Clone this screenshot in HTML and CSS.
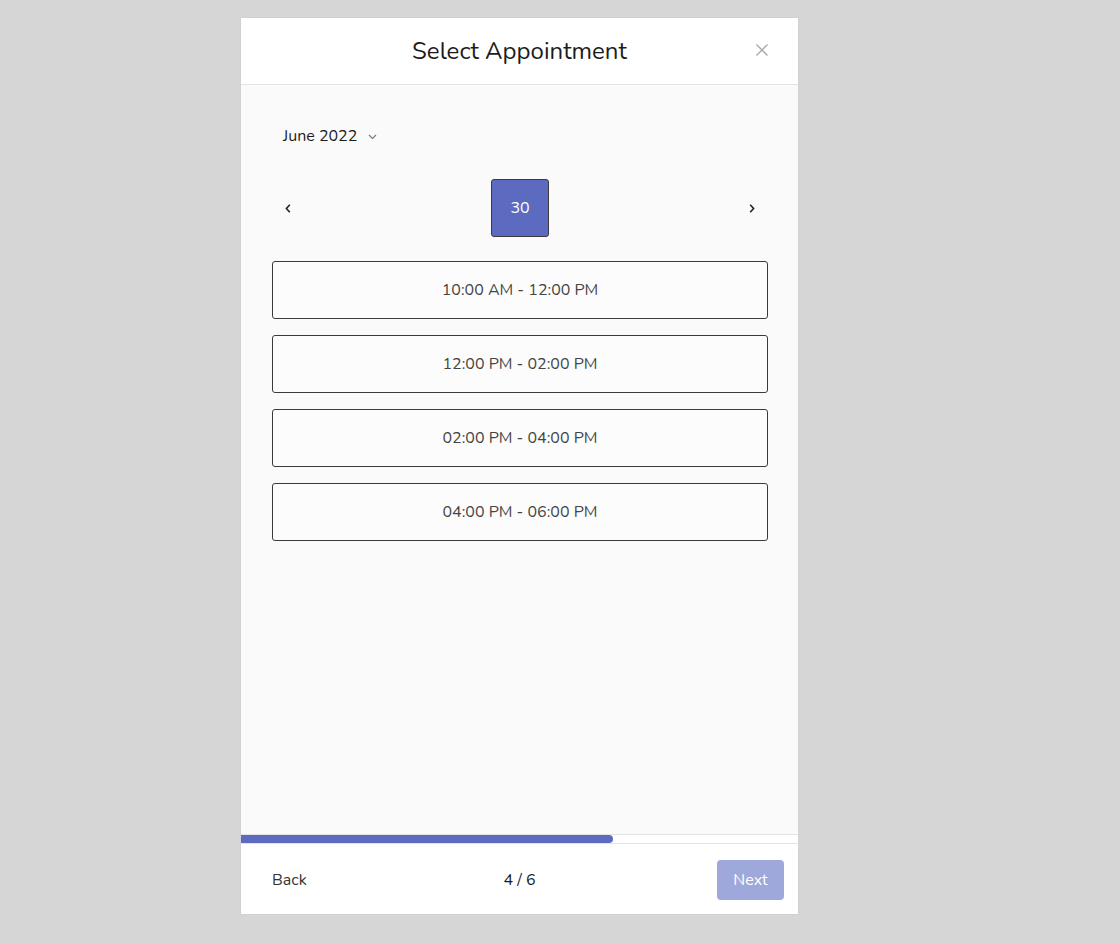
FILE: index.html
```html
<!DOCTYPE html>
<html lang="en">
<head>
<meta charset="utf-8">
<title>Select Appointment</title>
<link rel="stylesheet" href="styles.css">
</head>
<body>
<div class="modal">
  <header class="modal-header">
    <h1 class="modal-title">Select Appointment</h1>
    <button class="close-btn" aria-label="Close">
      <svg width="14" height="14" viewBox="0 0 14 14"><path d="M1.5 1.5 L12.5 12.5 M12.5 1.5 L1.5 12.5" stroke="#a9a9a9" stroke-width="1.4" fill="none"/></svg>
    </button>
  </header>
  <main class="modal-body">
    <div class="month-row">
      <span class="month-label">June 2022</span>
      <svg class="month-caret" width="9" height="6" viewBox="0 0 9 6"><path d="M1 1 L4.5 4.5 L8 1" stroke="#777" stroke-width="1.1" fill="none"/></svg>
    </div>
    <div class="day-row">
      <button class="arrow-btn" aria-label="Previous">
        <svg width="6" height="9" viewBox="0 0 6 9"><path d="M4.8 0.8 L1.4 4.5 L4.8 8.2" stroke="#222" stroke-width="1.6" fill="none"/></svg>
      </button>
      <div class="day selected">30</div>
      <button class="arrow-btn" aria-label="Next">
        <svg width="6" height="9" viewBox="0 0 6 9"><path d="M1.2 0.8 L4.6 4.5 L1.2 8.2" stroke="#222" stroke-width="1.6" fill="none"/></svg>
      </button>
    </div>
    <div class="slots">
      <button class="slot">10:00 AM - 12:00 PM</button>
      <button class="slot">12:00 PM - 02:00 PM</button>
      <button class="slot">02:00 PM - 04:00 PM</button>
      <button class="slot">04:00 PM - 06:00 PM</button>
    </div>
  </main>
  <div class="progress"><div class="progress-fill" style="width: 66.8%"></div></div>
  <footer class="modal-footer">
    <div class="footer-left"><button class="back-btn">Back</button></div>
    <span class="step">4 / 6</span>
    <div class="footer-right"><button class="next-btn" disabled>Next</button></div>
  </footer>
</div>
</body>
</html>
```
FILE: styles.css
```css
* { box-sizing: border-box; }
html, body { margin: 0; padding: 0; }
body {
  background: #d6d6d6;
  height: 943px;
  font-family: "Nunito", "Lato", "Open Sans", sans-serif;
  color: #222;
}
button { font-family: inherit; }
.modal {
  width: 557px;
  height: 896px;
  margin: 18px 0 0 241px;
  background: #fff;
  display: flex;
  flex-direction: column;
  box-shadow: 0 0 1px rgba(0,0,0,0.12);
}
.modal-header {
  position: relative;
  height: 67px;
  border-bottom: 1px solid #e3e3e3;
  display: flex;
  align-items: center;
  justify-content: center;
}
.modal-title {
  margin: 0;
  font-size: 24px;
  font-weight: 400;
  color: #1c1c1c;
}
.close-btn {
  position: absolute;
  right: 29px;
  top: 25px;
  background: none;
  border: 0;
  padding: 0;
  width: 14px;
  height: 14px;
  display: flex;
}
.modal-body {
  flex: 1;
  background: #fafafa;
  padding: 41px 30px 0 31px;
}
.month-row {
  display: flex;
  align-items: center;
  gap: 11px;
  padding-left: 11px;
  height: 20px;
}
.month-label {
  font-size: 16px;
  color: #1c1c1c;
}
.month-caret { margin-top: 1px; }
.day-row {
  margin-top: 33px;
  height: 58px;
  display: flex;
  align-items: center;
  justify-content: space-between;
  padding: 0 13px;
}
.arrow-btn {
  background: none;
  border: 0;
  padding: 0;
  width: 6px;
  height: 9px;
  display: flex;
}
.day {
  width: 58px;
  height: 58px;
  border-radius: 3px;
  display: flex;
  align-items: center;
  justify-content: center;
  font-size: 16px;
}
.day.selected {
  background: #5c6bc0;
  border: 1px solid #3a3a3a;
  color: #fff;
}
.slots {
  margin-top: 24px;
  display: flex;
  flex-direction: column;
  gap: 16px;
}
.slot {
  height: 58px;
  width: 100%;
  background: #fcfcfc;
  border: 1px solid #3a3a3a;
  border-radius: 3px;
  font-size: 16px;
  color: #444;
  padding: 0;
}
.progress {
  height: 10px;
  border-top: 1px solid #e3e3e3;
  border-bottom: 1px solid #e3e3e3;
  background: #fff;
}
.progress-fill {
  height: 8px;
  background: #5c6bc0;
  border-radius: 0 4px 4px 0;
}
.modal-footer {
  height: 70px;
  display: grid;
  grid-template-columns: 1fr auto 1fr;
  align-items: center;
  padding: 2px 14px 0;
}
.footer-right { display: flex; justify-content: flex-end; }
.back-btn {
  background: none;
  border: 0;
  padding: 0;
  margin-left: 17px;
  font-size: 16px;
  color: #333;
}
.step {
  font-size: 16px;
  color: #1c1c1c;
}
.next-btn {
  width: 67px;
  height: 40px;
  border: 0;
  border-radius: 4px;
  background: #9fa8da;
  color: #fff;
  font-size: 16px;
  padding: 0;
}
```
